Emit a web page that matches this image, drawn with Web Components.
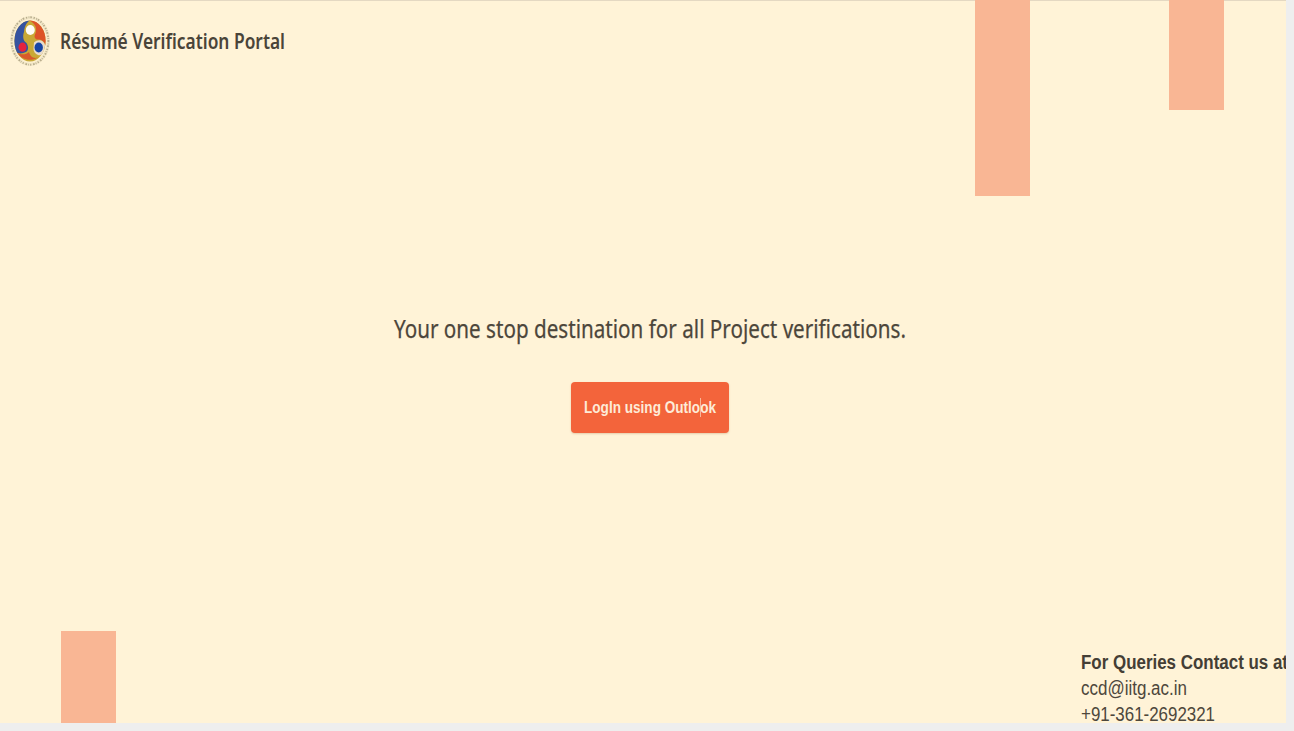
<!DOCTYPE html>
<html lang="en">
<head>
<meta charset="utf-8">
<title>Résumé Verification Portal</title>
<style>
html, body { margin: 0; height: 100%; background: #eeeeee; overflow: hidden; }
</style>
</head>
<body>
<verification-portal></verification-portal>
<script>
// One line of text condensed horizontally to the given width.
class FitLine extends HTMLElement {
  connectedCallback() {
    const root = this.attachShadow({ mode: 'open' });
    root.innerHTML = `<style>
      :host { display: block; white-space: nowrap; flex: none; }
      span { display: inline-block; transform-origin: 0 50%; }
    </style><span><slot></slot></span>`;
    const span = root.querySelector('span');
    const target = Number(this.getAttribute('width'));
    this.style.width = target + 'px';
    span.style.transform = `scaleX(${target / span.getBoundingClientRect().width})`;
  }
}

class InstituteSeal extends HTMLElement {
  connectedCallback() {
    this.attachShadow({ mode: 'open' }).innerHTML = `<style>
      :host { display: block; width: 42px; height: 52px; flex: none; }
      svg { display: block; }
    </style>
    <svg width="42" height="52" viewBox="0 0 42 52">
      <defs><clipPath id="disc"><ellipse cx="21" cy="26" rx="15.600" ry="20.600"/></clipPath></defs>
      <ellipse cx="21" cy="26" rx="18.200" ry="23.400" fill="none" stroke="#f3e8c8" stroke-width="3.400"/>
      <ellipse cx="21" cy="26" rx="18.400" ry="23.700" fill="none" stroke="#8f8466" stroke-width="1.900" stroke-dasharray="1.2 1.5 .7 1.1 1.6 1.8" opacity=".6"/>
      <g clip-path="url(#disc)">
        <rect width="42" height="52" fill="#c9a935"/>
        <path d="M21 5C12 5 5 13 5 27L5 36C8 39 13 39 17 37C20 35 19.500 31 17.500 28C14 26 13.500 21 15 17C15.500 12 17 8 21 5Z" fill="#3553a0"/>
        <path d="M19 5C27 8 28.500 14 26 19.500C24.500 23 27 25 30 24.500C34 25 36 28 37 31L38 5Z" fill="#dd5328"/>
        <path d="M8 37.500C13 40.500 17 39.500 20 37C21 41 24 44 29 42.500C22 46.500 13 45.500 8 37.500Z" fill="#d85a2b"/>
        <path d="M25 27.500C29 24 34.500 24.500 36 30L35 38.500C31 42.500 25 39.500 24.500 34Z" fill="#e9dccb"/>
      </g>
      <ellipse cx="13.500" cy="32.200" rx="4" ry="4.600" fill="#e5223e"/>
      <ellipse cx="21.300" cy="15" rx="4.500" ry="5" fill="#fffdf5"/>
      <ellipse cx="29.700" cy="32.500" rx="4.200" ry="5" fill="#1745a4"/>
    </svg>`;
  }
}

class PortalHeader extends HTMLElement {
  connectedCallback() {
    this.attachShadow({ mode: 'open' }).innerHTML = `<style>
      :host { display: flex; align-items: center; height: 52px; padding: 15px 0 0 9px; gap: 9px; }
      fit-line { font: 600 22px/32px "Noto Sans", sans-serif; color: #4a4439; padding-bottom: 2px; }
    </style>
    <institute-seal></institute-seal>
    <fit-line width="225"><slot></slot></fit-line>`;
  }
}

class LoginButton extends HTMLElement {
  connectedCallback() {
    this.attachShadow({ mode: 'open' }).innerHTML = `<style>
      :host { display: block; }
      button { display: flex; align-items: center; justify-content: center; position: relative;
        width: 158px; height: 51px; padding: 0; border: 0; border-radius: 4px; background: #f3643b;
        box-shadow: 0 1px 2px rgba(150, 90, 40, .25);
        color: #fdebd8; font: bold 17px/22px "Liberation Sans", Arial, sans-serif; }
      i { position: absolute; left: 129px; top: 16px; width: 1px; height: 19px; background: #f9b698; }
    </style>
    <button><fit-line width="132"><slot></slot></fit-line><i></i></button>`;
  }
}

class DecorBar extends HTMLElement {
  connectedCallback() {
    this.attachShadow({ mode: 'open' }).innerHTML = `<style>
      :host { display: block; width: 55px; background: #f9b694; }
    </style>`;
  }
}

class ContactInfo extends HTMLElement {
  connectedCallback() {
    this.attachShadow({ mode: 'open' }).innerHTML = `<style>
      :host { display: block; font: 19.500px/26px "Liberation Sans", Arial, sans-serif; color: #4d473c; }
      .title { font-weight: bold; color: #443e35; }
    </style>
    <fit-line class="title" width="207">For Queries Contact us at</fit-line>
    <fit-line width="106">ccd@iitg.ac.in</fit-line>
    <fit-line width="134">+91-361-2692321</fit-line>`;
  }
}

class VerificationPortal extends HTMLElement {
  connectedCallback() {
    this.attachShadow({ mode: 'open' }).innerHTML = `<style>
      :host { display: grid; grid-template: 723px / 1286px; width: 1286px; height: 723px;
        overflow: hidden; background: #fff3d7; box-shadow: inset 0 1px #e4d8c2; }
      portal-header, main, contact-info, decor-bar { grid-area: 1 / 1; align-self: start; justify-self: start; }
      .tall { margin-left: 975px; height: 196px; }
      .short { margin-left: 1169px; height: 110px; }
      .low { margin-left: 61px; align-self: end; height: 92px; }
      main { display: flex; flex-direction: column; align-items: center; width: 1300px; padding-top: 310px; }
      h1 { margin: 0; font: 400 25.500px/36px "Noto Sans", sans-serif; color: #4c463b; -webkit-text-stroke: .25px #4c463b; }
      login-button { margin-top: 36px; }
      contact-info { margin: 649px 0 0 1081px; }
    </style>
    <decor-bar class="tall"></decor-bar>
    <decor-bar class="short"></decor-bar>
    <decor-bar class="low"></decor-bar>
    <portal-header>Résumé Verification Portal</portal-header>
    <main>
      <h1><fit-line width="512">Your one stop destination for all Project verifications.</fit-line></h1>
      <login-button>LogIn using Outlook</login-button>
    </main>
    <contact-info></contact-info>`;
  }
}

customElements.define('fit-line', FitLine);
customElements.define('institute-seal', InstituteSeal);
customElements.define('portal-header', PortalHeader);
customElements.define('login-button', LoginButton);
customElements.define('decor-bar', DecorBar);
customElements.define('contact-info', ContactInfo);
customElements.define('verification-portal', VerificationPortal);
</script>
</body>
</html>
